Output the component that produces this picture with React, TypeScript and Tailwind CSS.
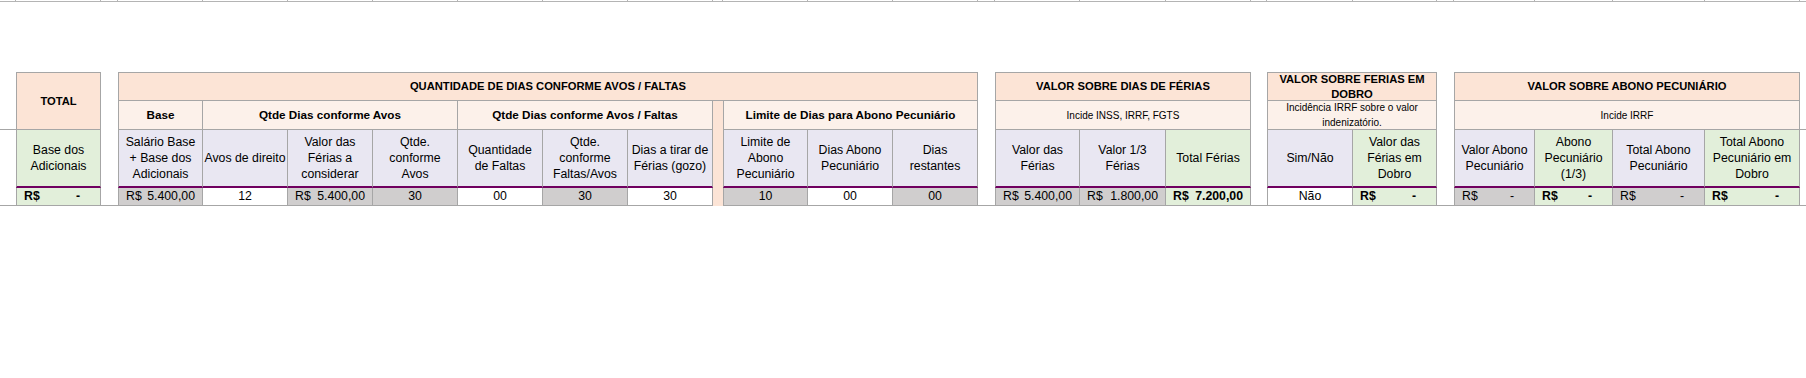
import type { ReactNode } from "react"

const line = "border-[#a6a6a6]"
const salmon = "bg-[#fce4d6]"
const peach = "bg-[#fcf1ea]"
const lav = "bg-[#e9e7f2]"
const green = "bg-[#e2efda]"
const gray = "bg-[#d0cece]"

const title = "text-[11.2px] font-bold leading-[15px]"
const sub = "text-[11.7px] font-bold"
const small = "text-[10px] leading-[15px]"

function Cell ({ className = "", children }: { className?: string, children?: ReactNode }) {
  return (
    <div className={"flex items-center justify-center text-center " + line + " " + className}>
      {children}
    </div>
  )
}

// label row: purple rule underneath
function Label ({ bg, first, children }: { bg: string, first?: boolean, children: ReactNode }) {
  return (
    <Cell className={bg + " border-r border-b-2 border-b-[#700060] text-[12.3px] leading-[16px] " + (first ? "border-l" : "")}>
      <div>{children}</div>
    </Cell>
  )
}

function Money ({ bg, value, bold, first }: { bg: string, value?: string, bold?: boolean, first?: boolean }) {
  return (
    <Cell className={bg + " border-r border-b " + (first ? "border-l " : "") + (bold ? "font-bold" : "")}>
      <div className="flex w-full justify-between px-[7px]">
        <span>R$</span>
        {value ? <span>{value}</span> : <span className="pr-[13px]">-</span>}
      </div>
    </Cell>
  )
}

function Num ({ bg, value, first }: { bg: string, value: string, first?: boolean }) {
  return (
    <Cell className={bg + " border-r border-b " + (first ? "border-l" : "")}>{value}</Cell>
  )
}

export default function App () {
  return (
    <div className="h-[378px] w-full bg-white text-black font-['Liberation_Sans',Arial,sans-serif]">
      <div className="grid grid-cols-[16px_85px_17px_85px_85px_85px_85px_85px_85px_85px_10px_85px_85px_85px_17px_85px_86px_85px_16px_86px_84px_17px_81px_78px_92px_95px_1fr] grid-rows-[2px_70px_29px_29px_58px_18px] text-[12.3px]">

        {/* remains of the sheet row above */}
        {Array.from({ length: 26 }).map((_, i) => (
          <div key={i} className="border-r border-b border-[#b4b4b4]" />
        ))}
        <div className="border-b border-[#b4b4b4]" />

        <div className="col-span-full" />

        {/* header row 1 */}
        <div />
        <Cell className={salmon + " row-span-2 border " + title}>TOTAL</Cell>
        <div />
        <Cell className={salmon + " col-span-11 border " + title}>QUANTIDADE DE DIAS CONFORME AVOS / FALTAS</Cell>
        <div />
        <Cell className={salmon + " col-span-3 border " + title}>VALOR SOBRE DIAS DE FÉRIAS</Cell>
        <div />
        <Cell className={salmon + " col-span-2 border " + title}>VALOR SOBRE FERIAS EM<br />DOBRO</Cell>
        <div />
        <Cell className={salmon + " col-span-4 border " + title}>VALOR SOBRE ABONO PECUNIÁRIO</Cell>
        <div />

        {/* header row 2 */}
        <div className={"border-b " + line} />
        <div />
        <Cell className={peach + " border-l border-r border-b " + sub}>Base</Cell>
        <Cell className={peach + " col-span-3 border-r border-b " + sub}>Qtde Dias conforme Avos</Cell>
        <Cell className={peach + " col-span-3 border-r border-b " + sub}>Qtde Dias conforme Avos / Faltas</Cell>
        <div className={salmon + " row-span-3"} />
        <Cell className={peach + " col-span-3 border-l border-r border-b " + sub}>Limite de Dias para Abono Pecuniário</Cell>
        <div />
        <Cell className={peach + " col-span-3 border-l border-r border-b " + small}>Incide INSS, IRRF, FGTS</Cell>
        <div />
        <Cell className={peach + " col-span-2 border-l border-r border-b " + small}>Incidência IRRF sobre o valor<br />indenizatório.</Cell>
        <div />
        <Cell className={peach + " col-span-4 border-l border-r border-b " + small}>Incide IRRF</Cell>
        <div className={"border-b " + line} />

        {/* column labels */}
        <div />
        <Label bg={green} first>Base dos<br />Adicionais</Label>
        <div />
        <Label bg={lav} first>Salário Base<br />+ Base dos<br />Adicionais</Label>
        <Label bg={lav}>Avos de direito</Label>
        <Label bg={lav}>Valor das<br />Férias a<br />considerar</Label>
        <Label bg={lav}>Qtde.<br />conforme<br />Avos</Label>
        <Label bg={lav}>Quantidade<br />de Faltas</Label>
        <Label bg={lav}>Qtde.<br />conforme<br />Faltas/Avos</Label>
        <Label bg={lav}>Dias a tirar de<br />Férias (gozo)</Label>
        <Label bg={lav} first>Limite de<br />Abono<br />Pecuniário</Label>
        <Label bg={lav}>Dias Abono<br />Pecuniário</Label>
        <Label bg={lav}>Dias<br />restantes</Label>
        <div />
        <Label bg={lav} first>Valor das<br />Férias</Label>
        <Label bg={lav}>Valor 1/3<br />Férias</Label>
        <Label bg={green}>Total Férias</Label>
        <div />
        <Label bg={lav} first>Sim/Não</Label>
        <Label bg={green}>Valor das<br />Férias em<br />Dobro</Label>
        <div />
        <Label bg={lav} first>Valor Abono<br />Pecuniário</Label>
        <Label bg={green}>Abono<br />Pecuniário<br />(1/3)</Label>
        <Label bg={lav}>Total Abono<br />Pecuniário</Label>
        <Label bg={green}>Total Abono<br />Pecuniário em<br />Dobro</Label>
        <div />

        {/* values */}
        <div className={"border-b " + line} />
        <Money bg={green} bold first />
        <div className={"border-b " + line} />
        <Money bg={gray} value="5.400,00" first />
        <Num bg="bg-white" value="12" />
        <Money bg={gray} value="5.400,00" />
        <Num bg={gray} value="30" />
        <Num bg="bg-white" value="00" />
        <Num bg={gray} value="30" />
        <Num bg="bg-white" value="30" />
        <Num bg={gray} value="10" first />
        <Num bg="bg-white" value="00" />
        <Num bg={gray} value="00" />
        <div className={"border-b " + line} />
        <Money bg={gray} value="5.400,00" first />
        <Money bg={gray} value="1.800,00" />
        <Money bg={green} value="7.200,00" bold />
        <div className={"border-b " + line} />
        <Num bg="bg-white" value="Não" first />
        <Money bg={green} bold />
        <div className={"border-b " + line} />
        <Money bg={gray} first />
        <Money bg={green} bold />
        <Money bg={gray} />
        <Money bg={green} bold />
        <div className={"border-b " + line} />
      </div>
    </div>
  )
}
